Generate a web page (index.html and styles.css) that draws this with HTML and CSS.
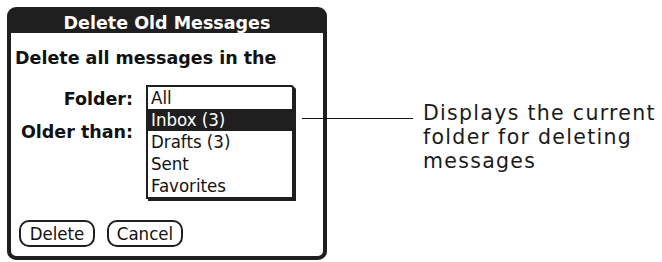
FILE: index.html
```html
<!DOCTYPE html>
<html>
<head>
<meta charset="utf-8">
<link rel="stylesheet" href="styles.css">
</head>
<body>
<div class="page">
  <div class="dialog">
    <div class="title">Delete Old Messages</div>
    <div class="body">
      <div class="heading">Delete all messages in the</div>
      <div class="form">
        <div class="label">Folder:</div>
        <div class="label">Older than:</div>
      </div>
      <div class="list">
        <div class="item">All</div>
        <div class="item selected">Inbox (3)</div>
        <div class="item">Drafts (3)</div>
        <div class="item">Sent</div>
        <div class="item">Favorites</div>
      </div>
      <div class="buttons">
        <div class="btn">Delete</div>
        <div class="btn">Cancel</div>
      </div>
    </div>
  </div>
  <div class="callout">
    <div class="leader"></div>
    <div class="note">Displays the current<br>folder for deleting<br>messages</div>
  </div>
</div>
</body>
</html>
```
FILE: styles.css
```css
html, body {
  margin: 0;
  padding: 0;
  background: #ffffff;
}
.page {
  display: flex;
  align-items: flex-start;
  padding: 7px 0 0 7px;
  width: 662px;
  height: 262px;
  box-sizing: border-box;
  overflow: hidden;
}
.dialog {
  width: 320px;
  height: 253px;
  box-sizing: border-box;
  border: 4px solid #1f1f1f;
  border-radius: 9px;
  display: flex;
  flex-direction: column;
  background: #fff;
  flex: none;
}
.title {
  height: 22px;
  background: #1f1f1f;
  color: #fff;
  font-family: "DejaVu Sans", sans-serif;
  font-weight: bold;
  font-size: 17.5px;
  line-height: 24px;
  text-align: center;
}
.body {
  flex: 1;
  position: relative;
  display: flex;
  flex-direction: column;
  padding: 0 0 9px 4px;
  font-family: "DejaVu Sans Condensed", "DejaVu Sans", sans-serif;
  color: #111;
}
.heading {
  font-family: "DejaVu Sans", sans-serif;
  font-weight: bold;
  font-size: 17.5px;
  line-height: 22px;
  margin-top: 14px;
}
.form {
  display: grid;
  grid-template-columns: 118px;
  grid-auto-rows: 33px;
  margin-top: 19px;
}
.label {
  font-family: "DejaVu Sans", sans-serif;
  font-weight: bold;
  font-size: 17.5px;
  line-height: 22px;
  text-align: right;
}
.list {
  position: absolute;
  left: 135px;
  top: 52px;
  width: 144px;
  border: 2px solid #1f1f1f;
  border-radius: 0 3px 0 0;
  box-shadow: 2px 2px 0 #1f1f1f;
  background: #fff;
}
.item {
  height: 22px;
  line-height: 22px;
  font-size: 18.5px;
  padding-left: 3px;
}
.item.selected {
  background: #1f1f1f;
  color: #fff;
}
.buttons {
  margin-top: auto;
  display: flex;
  gap: 12px;
  padding-left: 4px;
}
.btn {
  width: 76px;
  height: 27px;
  box-sizing: border-box;
  border: 2px solid #1f1f1f;
  border-radius: 10px;
  font-size: 18.5px;
  line-height: 23px;
  text-align: center;
}
.callout {
  position: relative;
  margin-left: 96px;
  margin-top: 94px;
}
.leader {
  position: absolute;
  left: -121px;
  top: 17px;
  width: 111px;
  height: 1px;
  background: #111;
}
.note {
  font-family: "DejaVu Sans", sans-serif;
  font-size: 20.5px;
  line-height: 24px;
  letter-spacing: 1.3px;
  color: #1a1a1a;
  white-space: nowrap;
}
```
